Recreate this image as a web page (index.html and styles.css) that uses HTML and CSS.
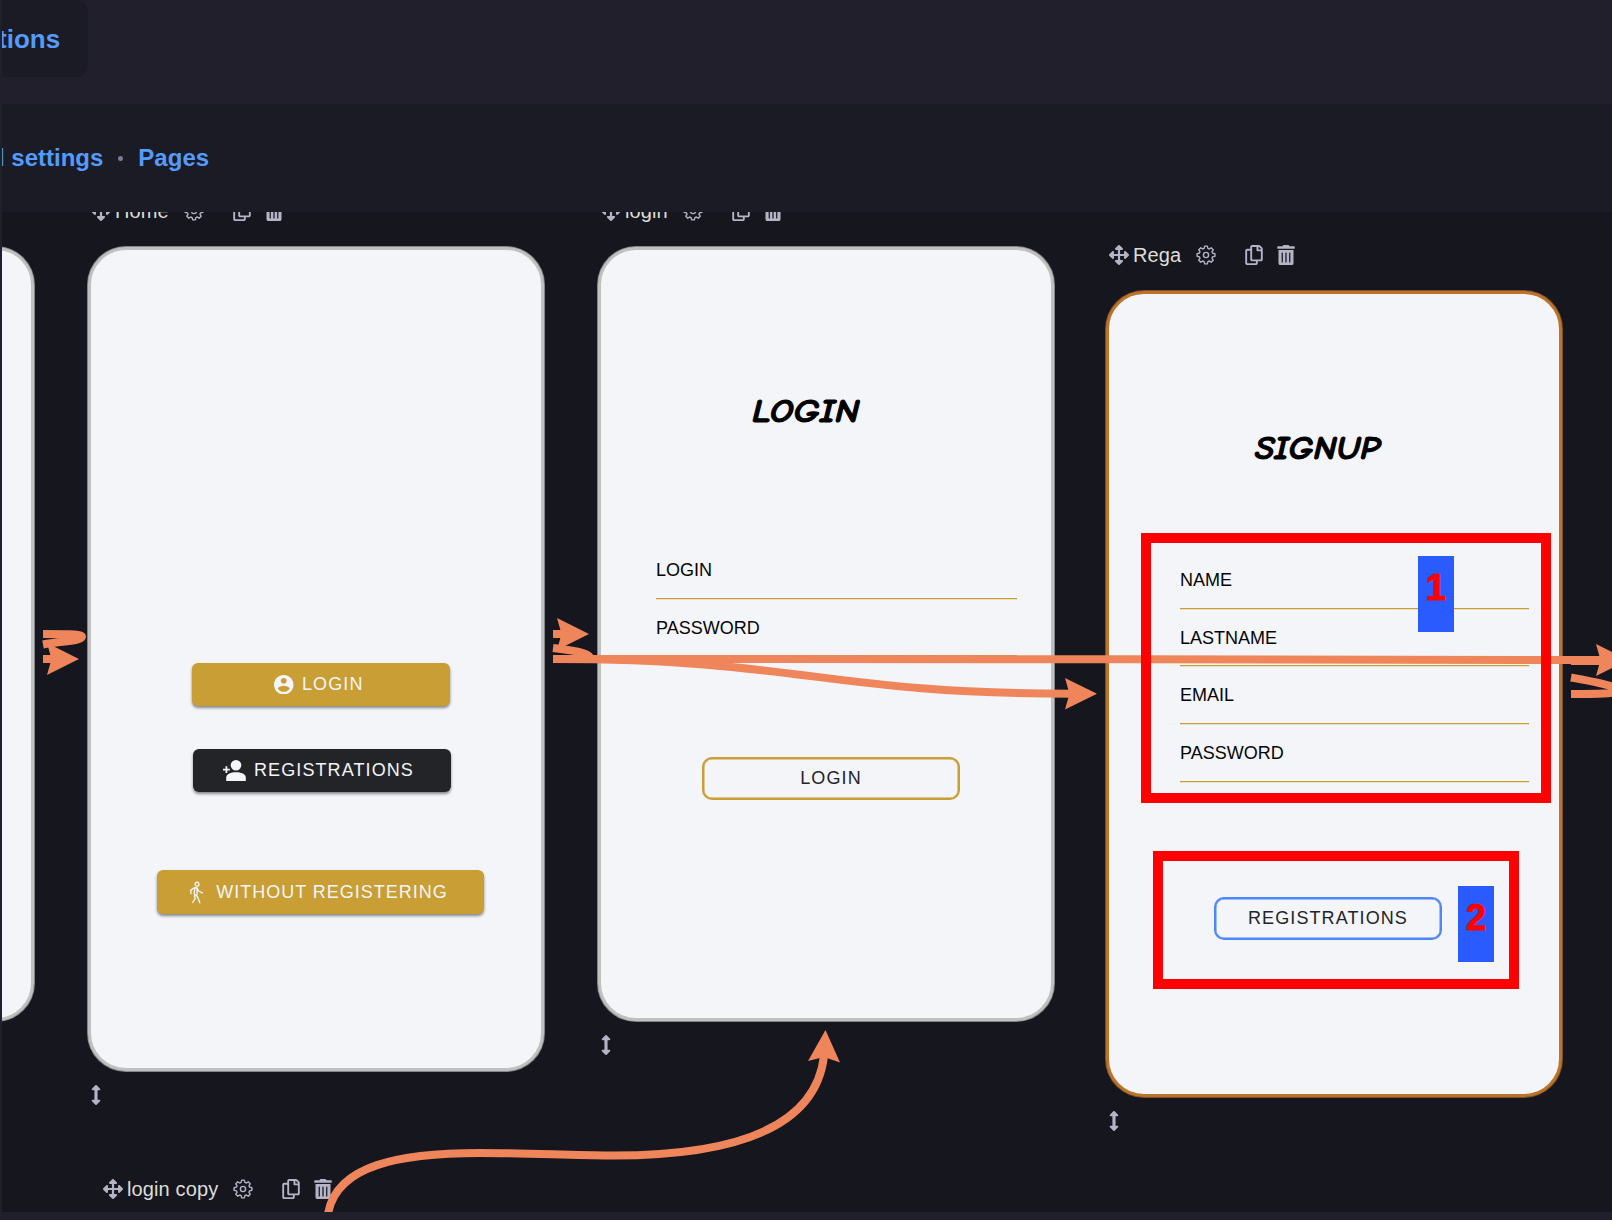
FILE: index.html
```html
<!DOCTYPE html>
<html lang="en">
<head>
<meta charset="utf-8">
<title>Pages</title>
<link rel="stylesheet" href="styles.css">
</head>
<body>
<svg class="defs" width="0" height="0" aria-hidden="true">
  <symbol id="move" viewBox="0 0 512 512"><path d="M352.201 425.775l-79.196 79.196c-9.373 9.373-24.568 9.373-33.941 0l-79.196-79.196c-15.119-15.119-4.411-40.971 16.971-40.97h51.162L228 284H127.196v51.162c0 21.382-25.851 32.09-40.971 16.971L7.029 272.937c-9.373-9.373-9.373-24.569 0-33.941L86.225 159.8c15.119-15.119 40.971-4.411 40.971 16.971V228H228V127.196h-51.23c-21.382 0-32.09-25.851-16.971-40.971l79.196-79.196c9.373-9.373 24.568-9.373 33.941 0l79.196 79.196c15.119 15.119 4.411 40.971-16.971 40.971h-51.162V228h100.804v-51.162c0-21.382 25.851-32.09 40.97-16.971l79.196 79.196c9.373 9.373 9.373 24.569 0 33.941L425.773 352.2c-15.119 15.119-40.971 4.411-40.97-16.971V284H284v100.804h51.23c21.382 0 32.09 25.851 16.971 40.971z"/></symbol>
  <symbol id="gear" viewBox="-10 -10 20 20"><g fill="none" stroke="currentColor" stroke-width="1.4" stroke-linejoin="round"><path d="M-1.9-6.6L-1.3-8.9H1.3L1.9-6.6L3.3-6L5.2-7.2L7.2-5.2L6-3.3L6.6-1.9L8.9-1.3V1.3L6.6 1.9L6 3.3L7.2 5.2L5.2 7.2L3.3 6L1.9 6.6L1.3 8.9H-1.3L-1.9 6.6L-3.3 6L-5.2 7.2L-7.2 5.2L-6 3.3L-6.6 1.9L-8.9 1.3V-1.3L-6.6-1.9L-6-3.3L-7.2-5.2L-5.2-7.2L-3.3-6Z"/><circle r="2.6"/></g></symbol>
  <symbol id="copy" viewBox="0 0 448 512"><path d="M433.941 65.941l-51.882-51.882A48 48 0 0 0 348.118 0H176c-26.51 0-48 21.49-48 48v48H48c-26.51 0-48 21.49-48 48v320c0 26.51 21.49 48 48 48h224c26.51 0 48-21.49 48-48v-48h80c26.51 0 48-21.49 48-48V99.882a48 48 0 0 0-14.059-33.941zM266 464H54a6 6 0 0 1-6-6V150a6 6 0 0 1 6-6h74v224c0 26.51 21.49 48 48 48h96v42a6 6 0 0 1-6 6zm128-96H182a6 6 0 0 1-6-6V54a6 6 0 0 1 6-6h106v88c0 13.255 10.745 24 24 24h88v202a6 6 0 0 1-6 6zm6-256h-64V48h9.632c1.591 0 3.117.632 4.243 1.757l48.368 48.368a6 6 0 0 1 1.757 4.243V112z"/></symbol>
  <symbol id="trash" viewBox="0 0 448 512"><path d="M32 464a48 48 0 0 0 48 48h288a48 48 0 0 0 48-48V128H32zm272-256a16 16 0 0 1 32 0v224a16 16 0 0 1-32 0zm-96 0a16 16 0 0 1 32 0v224a16 16 0 0 1-32 0zm-96 0a16 16 0 0 1 32 0v224a16 16 0 0 1-32 0zM432 32H312l-9.4-18.7A24 24 0 0 0 281.1 0H166.8a23.72 23.72 0 0 0-21.4 13.3L136 32H16A16 16 0 0 0 0 48v32a16 16 0 0 0 16 16h416a16 16 0 0 0 16-16V48a16 16 0 0 0-16-16z"/></symbol>
  <symbol id="resize" viewBox="0 0 256 512"><path d="M214.059 377.941H168V134.059h46.059c21.382 0 32.09-25.851 16.971-40.971L144.971 7.029c-9.373-9.373-24.568-9.373-33.941 0L24.971 93.088c-15.119 15.119-4.411 40.971 16.971 40.971H88v243.882H41.941c-21.382 0-32.09 25.851-16.971 40.971l86.059 86.059c9.373 9.373 24.568 9.373 33.941 0l86.059-86.059c15.12-15.119 4.412-40.971-16.97-40.971z"/></symbol>
</svg>

<header class="topbar"><div class="tab">tions</div></header>
<nav class="crumbs">
  <a class="crumb">l settings</a><span class="dot"></span><a class="crumb">Pages</a>
</nav>

<main class="canvas">
  <div class="board">
    <section class="node node-prev"><div class="card"></div></section>

    <section class="node node-home">
      <div class="tools"><svg class="i20"><use href="#move"/></svg><span class="name">Home</span><svg class="i20"><use href="#gear"/></svg><svg class="i18 copy"><use href="#copy"/></svg><svg class="i18"><use href="#trash"/></svg></div>
      <div class="card">
        <div class="btn gold login"><svg class="ic-user" viewBox="2 2 20 20"><path d="M12 2C6.48 2 2 6.48 2 12s4.48 10 10 10 10-4.48 10-10S17.52 2 12 2zm0 3c1.66 0 3 1.34 3 3s-1.34 3-3 3-3-1.34-3-3 1.34-3 3-3zm0 14.2c-2.5 0-4.71-1.28-6-3.22.03-1.99 4-3.08 6-3.08 1.99 0 5.97 1.09 6 3.08-1.29 1.94-3.5 3.22-6 3.22z"/></svg><span>LOGIN</span></div>
        <div class="btn dark"><svg class="ic-add" viewBox="0 0 23 21"><circle cx="13" cy="5.3" r="5.3"/><path d="M3.2 21V17.5C3.2 14 8 12.2 13 12.2S22.8 14 22.8 17.5V21Z"/><path d="M3.4 6.3V13M0 9.6H6.8" fill="none" stroke="currentColor" stroke-width="1.8"/></svg><span>REGISTRATIONS</span></div>
        <div class="btn gold wide"><svg class="ic-walk" viewBox="0 0 13 22"><g fill="none" stroke="currentColor" stroke-width="1.4" stroke-linejoin="round" stroke-linecap="round"><circle cx="7" cy="2.7" r="1.9"/><path d="M.9 12V8.6L4.2 6.2H7L8.7 9.5L12.3 11.4M4.7 6.4L4.2 12.5L7.6 15.6L9.8 21.3M7 7V13.5M4.4 14.5L5.2 17L2.7 21"/></g></svg><span>WITHOUT REGISTERING</span></div>
      </div>
      <svg class="resize"><use href="#resize"/></svg>
    </section>

    <section class="node node-login">
      <div class="tools"><svg class="i20"><use href="#move"/></svg><span class="name">login</span><svg class="i20"><use href="#gear"/></svg><svg class="i18 copy"><use href="#copy"/></svg><svg class="i18"><use href="#trash"/></svg></div>
      <div class="card">
        <h2 class="title">LOGIN</h2>
        <div class="fields"><div class="field">LOGIN</div><div class="field">PASSWORD</div></div>
        <div class="btn outline">LOGIN</div>
      </div>
      <svg class="resize"><use href="#resize"/></svg>
    </section>

    <section class="node node-rega">
      <div class="tools"><svg class="i20"><use href="#move"/></svg><span class="name">Rega</span><svg class="i20"><use href="#gear"/></svg><svg class="i18 copy"><use href="#copy"/></svg><svg class="i18"><use href="#trash"/></svg></div>
      <div class="card">
        <h2 class="title">SIGNUP</h2>
        <div class="fields"><div class="field">NAME</div><div class="field">LASTNAME</div><div class="field">EMAIL</div><div class="field">PASSWORD</div></div>
        <div class="btn outline">REGISTRATIONS</div>
      </div>
      <svg class="resize"><use href="#resize"/></svg>
    </section>

    <section class="node node-copy">
      <div class="tools"><svg class="i20"><use href="#move"/></svg><span class="name">login copy</span><svg class="i20"><use href="#gear"/></svg><svg class="i18 copy"><use href="#copy"/></svg><svg class="i18"><use href="#trash"/></svg></div>
    </section>

    <svg class="links" viewBox="0 0 1612 1220">
      <g class="line">
        <path d="M43 634C60 634 82 634 82 636.5C82 641 62 641 43 644.5"/>
        <path d="M43 659H54"/>
        <path d="M553 634H565"/>
        <path d="M553 648C570 650 590 652.500 590 658"/>
        <path d="M553 659L1130 659.3L1602 660"/>
        <path d="M553 659C800 659 826 693.7 1071 693.7"/>
        <path d="M1571 661H1600M1571 677.5C1590 681 1618 686 1618 690C1618 694 1595 694 1571 694"/>
        <path d="M328 1214C336 1165 400 1153 480 1153C530 1153 570 1155.5 610 1155.5C740 1156 816 1125 824 1056"/>
      </g>
      <g class="heads">
        <path d="M79 659L47 643L51.500 659L47 675Z"/>
        <path d="M589 634L557 618L561.500 634L557 650Z"/>
        <path d="M1097 693.700L1065 678L1069.500 693.700L1065 709.500Z"/>
        <path d="M1628 660L1596 644L1600.500 660L1596 676Z"/>
        <path d="M825.500 1030L808 1061L824 1057L840 1062.500Z"/>
      </g>
    </svg>

    <div class="mark mark-fields"></div>
    <div class="mark mark-button"></div>
    <div class="num num-1">1</div>
    <div class="num num-2">2</div>
  </div>
</main>
<footer class="bottom"></footer>
<div class="edge"></div>
</body>
</html>
```

FILE: styles.css
```css
* { box-sizing: border-box; }
body {
  margin: 0;
  width: 1612px;
  height: 1220px;
  display: flex;
  flex-direction: column;
  overflow: hidden;
  background: #201f2b;
  font-family: "Liberation Sans", Arial, sans-serif;
}
svg { flex: none; fill: currentColor; }
.defs { position: absolute; }
.edge { position: absolute; left: 0; top: 0; width: 2px; height: 1220px; background: #201f2c; }

.topbar { height: 104px; background: #201f2b; }
.tab {
  width: 88px;
  height: 77px;
  padding-top: 24px;
  border-radius: 0 12px 12px 0;
  background: #1b1b25;
  color: #549bfb;
  font: bold 26px/30px "Liberation Sans", Arial, sans-serif;
  text-indent: -2px;
}
.crumbs {
  height: 108px;
  display: flex;
  align-items: center;
  background: #1b1b25;
  color: #549bfb;
  font: bold 24px/28px "Liberation Sans", Arial, sans-serif;
}
.crumb:first-child { margin-left: -2px; }
.dot { width: 5px; height: 5px; margin: 0 15px; border-radius: 50%; background: #7b7a90; }

.canvas { position: relative; height: 1000px; overflow: hidden; background: #16161e; }
.board { position: absolute; left: 0; top: -212px; width: 1612px; height: 1220px; }
.bottom { height: 8px; background: #201f2c; }

.node { position: absolute; width: 458px; }
.node-prev { left: -423px; top: 246px; }
.node-home { left: 87px; top: 200px; }
.node-login { left: 597px; top: 200px; }
.node-rega { left: 1105px; top: 244px; }
.node-copy { left: 99px; top: 1178px; }

.tools { display: flex; align-items: center; height: 22px; margin-bottom: 25px; padding-left: 4px; color: #b5b4c6; }
.name { margin: 0 15px 0 4px; color: #deddd9; font-size: 20px; line-height: 22px; white-space: nowrap; letter-spacing: .12px; }
.i20 { width: 20px; height: 20px; }
.i18 { width: 18px; height: 20px; }
.copy { margin: 0 14px 0 29px; }
.resize { display: block; width: 10px; height: 20px; margin: 14px 0 0 4px; color: #b5b4c6; }

.card {
  display: flex;
  flex-direction: column;
  align-items: flex-start;
  margin: 1px;
  border: 3px solid #c0c0c1;
  border-radius: 38px;
  background: #f3f5f9;
  box-shadow: 0 0 0 1px #858589;
}
.node-prev .card { height: 774px; }
.node-home .card { height: 824px; padding: 413px 0 0 66px; }
.node-login .card { height: 774px; padding: 139px 0 0 55px; }
.node-rega .card { height: 806px; border-color: #bb7429; box-shadow: 0 0 0 1px #7c502a; padding: 132px 0 0 71px; }

.btn {
  display: flex;
  align-items: center;
  justify-content: center;
  width: 258px;
  height: 43px;
  border-radius: 6px;
  font-size: 18px;
  letter-spacing: 1.1px;
  white-space: nowrap;
}
.gold, .dark { color: #f3f5f9; box-shadow: 0 2px 3px rgba(0, 0, 0, .45); }
.gold { background: #c99e34; }
.dark { background: #222428; margin: 43px 0 78px 36px; padding: 0 7px 0 0; }
.login { margin-left: 35px; padding-right: 4px; }
.wide { width: 327px; height: 44px; padding-right: 3px; letter-spacing: 1px; }
.ic-user { width: 19.5px; height: 19.5px; margin-right: 8px; }
.ic-add { width: 23px; height: 21px; margin-right: 8px; }
.ic-walk { width: 13px; height: 23px; margin-right: 13px; }
.outline { border: 2px solid #c99e34; border-radius: 10px; color: #222428; }
.node-login .outline { margin: 101px 0 0 46px; box-shadow: inset 0 0 0 .5px #c99e34; }
.node-rega .outline { width: 228px; height: 43px; margin: 115px 0 0 34px; border-color: #4e86fb; box-shadow: inset 0 0 0 .5px #4e86fb; }

.title {
  margin: 0;
  font: italic 700 33px/44px "Comic Sans MS", "Comic Neue", "Noto Sans", sans-serif;
  color: #000;
  white-space: nowrap;
  transform-origin: 0 50%;
  -webkit-text-stroke: 1px #000;
}
.node-login .title { margin-left: 96px; transform: scaleX(1.13); }
.node-rega .title { margin-left: 75px; transform: scaleX(1.07); }
.fields { width: 361px; color: #050505; font-size: 18px; }
.node-login .fields { margin-top: 108px; }
.node-rega .fields { width: 349px; margin-top: 81.2px; }
.field { height: 57.6px; padding-top: 19px; line-height: 20px; border-bottom: 1px solid #c99e34; box-shadow: 0 1px 0 #ece0c4; }

.links { position: absolute; left: 0; top: 0; width: 1612px; height: 1220px; color: #ef865b; }
.line { fill: none; stroke: currentColor; stroke-width: 8; }

.mark { position: absolute; border: 10px solid #f00; }
.mark-fields { left: 1141px; top: 533px; width: 410px; height: 270px; }
.mark-button { left: 1153px; top: 851px; width: 366px; height: 138px; }
.num {
  position: absolute;
  width: 36px;
  height: 76px;
  padding-top: 12px;
  background: #2a5bff;
  color: #f00;
  font: bold 36px/40px "Liberation Sans", Arial, sans-serif;
  text-align: center;
  -webkit-text-stroke: 1px #f00;
}
.num-1 { left: 1418px; top: 556px; }
.num-2 { left: 1458px; top: 886px; }
```
